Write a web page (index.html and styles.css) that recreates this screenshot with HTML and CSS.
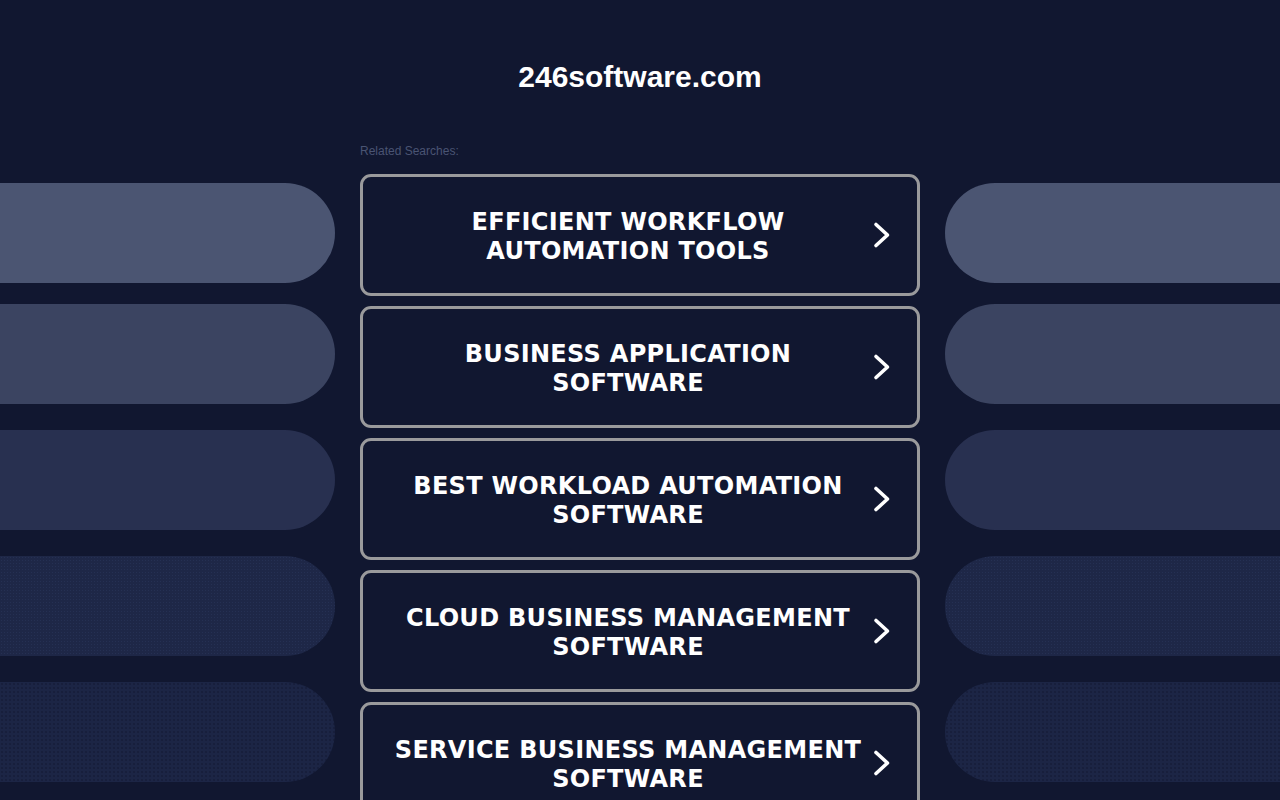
FILE: index.html
```html
<!DOCTYPE html>
<html lang="en">
<head>
<meta charset="utf-8">
<title>246software.com</title>
<link rel="stylesheet" href="styles.css">
</head>
<body>
<header class="header">
  <h1 class="site-title">246software.com</h1>
</header>
<main class="layout">
  <aside class="pills pills-left">
    <div class="pill pill-1"></div>
    <div class="pill pill-2 pill-tight"></div>
    <div class="pill pill-3"></div>
    <div class="pill pill-4"></div>
    <div class="pill pill-5"></div>
  </aside>
  <section class="center">
    <div class="related">Related Searches:</div>
    <div class="links">
      <a class="link-btn" href="#"><span class="link-text">EFFICIENT WORKFLOW AUTOMATION TOOLS</span><svg class="chev" viewBox="0 0 20 28" width="20" height="28"><path d="M4 3.5 L15.5 14 L4 24.5"/></svg></a>
      <a class="link-btn" href="#"><span class="link-text">BUSINESS APPLICATION SOFTWARE</span><svg class="chev" viewBox="0 0 20 28" width="20" height="28"><path d="M4 3.5 L15.5 14 L4 24.5"/></svg></a>
      <a class="link-btn" href="#"><span class="link-text">BEST WORKLOAD AUTOMATION SOFTWARE</span><svg class="chev" viewBox="0 0 20 28" width="20" height="28"><path d="M4 3.5 L15.5 14 L4 24.5"/></svg></a>
      <a class="link-btn" href="#"><span class="link-text">CLOUD BUSINESS MANAGEMENT SOFTWARE</span><svg class="chev" viewBox="0 0 20 28" width="20" height="28"><path d="M4 3.5 L15.5 14 L4 24.5"/></svg></a>
      <a class="link-btn" href="#"><span class="link-text">SERVICE BUSINESS MANAGEMENT SOFTWARE</span><svg class="chev" viewBox="0 0 20 28" width="20" height="28"><path d="M4 3.5 L15.5 14 L4 24.5"/></svg></a>
    </div>
  </section>
  <aside class="pills pills-right">
    <div class="pill pill-1"></div>
    <div class="pill pill-2 pill-tight"></div>
    <div class="pill pill-3"></div>
    <div class="pill pill-4"></div>
    <div class="pill pill-5"></div>
  </aside>
</main>
</body>
</html>
```

FILE: styles.css
```css
html, body {
  margin: 0;
  padding: 0;
  background: #111730;
  overflow: hidden;
}
body {
  font-family: "Liberation Sans", Arial, sans-serif;
  color: #fff;
}
.header {
  padding-top: 60px;
  text-align: center;
}
.site-title {
  margin: 0;
  font-family: "Liberation Sans", Arial, sans-serif;
  font-size: 30px;
  font-weight: bold;
  line-height: 34px;
  color: #fff;
}
.layout {
  display: grid;
  grid-template-columns: 335px 560px 335px;
  column-gap: 25px;
  margin-top: 50px;
}
.pills {
  display: flex;
  flex-direction: column;
  gap: 26px;
  padding-top: 39px;
}
.pill {
  height: 100px;
}
.pill-tight {
  margin-top: -5px;
}
.pills-left .pill {
  border-radius: 0 50px 50px 0;
}
.pills-right .pill {
  border-radius: 50px 0 0 50px;
}
.pill-1 { background: #4b5572; }
.pill-2 { background: #3b4461; }
.pill-3 { background: #283050; }
.pill-4 {
  background-color: #1e2747;
  background-image: radial-gradient(circle, rgba(60, 75, 120, 0.25) 0.6px, transparent 0.9px);
  background-size: 3px 3px;
}
.pill-5 {
  background-color: #1c2545;
  background-image: radial-gradient(circle, rgba(10, 15, 35, 0.4) 0.6px, transparent 0.9px);
  background-size: 4px 4px;
}
.related {
  font-family: "Liberation Sans", Arial, sans-serif;
  font-size: 12px;
  line-height: 14px;
  color: #4a5473;
  margin-bottom: 16px;
}
.links {
  display: flex;
  flex-direction: column;
  gap: 10px;
}
.link-btn {
  display: flex;
  align-items: center;
  height: 122px;
  box-sizing: border-box;
  border: 3px solid #9a9a9c;
  border-radius: 11px;
  padding: 0 25px 0 30px;
  text-decoration: none;
  color: #fff;
  background: #111730;
}
.link-text {
  flex: 1;
  text-align: center;
  font-family: "DejaVu Sans", Verdana, sans-serif;
  font-weight: bold;
  font-size: 24px;
  line-height: 29px;
  letter-spacing: 0.3px;
  padding-top: 4px;
}
.chev {
  flex: none;
  margin-left: 9px;
  fill: none;
  stroke: #fff;
  stroke-width: 3.6;
  stroke-linecap: round;
  stroke-linejoin: round;
}
```
